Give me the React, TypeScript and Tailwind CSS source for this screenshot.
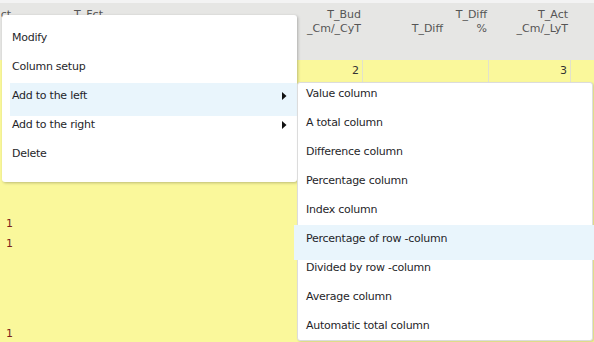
import React from 'react';
import clsx from 'clsx';

const mainItems = [
    { label: 'Modify' },
    { label: 'Column setup' },
    { label: 'Add to the left', sub: true, active: true },
    { label: 'Add to the right', sub: true },
    { label: 'Delete' },
];

const subItems = [
    'Value column',
    'A total column',
    'Difference column',
    'Percentage column',
    'Index column',
    'Percentage of row -column',
    'Divided by row -column',
    'Average column',
    'Automatic total column',
];

const Arrow = () => (
    <svg width="5" height="8" viewBox="0 0 5 8" className="mr-[10px]">
        <path d="M0 0 L4.5 4 L0 8 Z" fill="#111" />
    </svg>
);

const MenuItem = ({ label, active, sub }: { label: string; active?: boolean; sub?: boolean }) => (
    <div
        className={clsx(
            'h-[29px] pt-[4px] flex items-start justify-between',
            active && 'bg-[#e9f5fc] shadow-[0_0_0_2px_#e9f5fc]'
        )}
    >
        <span className="leading-[14px]">{label}</span>
        {sub && <div className="h-[14px] flex items-center"><Arrow /></div>}
    </div>
);

export default function App() {
    return (
        <div
            className="relative w-[594px] h-[342px] overflow-hidden bg-[#faf89b] text-[11px]"
            style={{ fontFamily: '"DejaVu Sans", Verdana, sans-serif' }}
        >
            {/* Header */}
            <div className="h-[3px] bg-[#f3f3f3]" />
            <div className="h-[57px] bg-[#e6e6e4] flex text-[#555] leading-[14px] pt-[5px]">
                <div className="w-[13px] text-right pr-[2px] overflow-hidden">ct</div>
                <div className="w-[92px] text-right pr-[2px]">T_Fct</div>
                <div className="w-[176px]" />
                <div className="w-[82px] text-right pr-[2px]">
                    <div>T_Bud</div>
                    <div>_Cm/_CyT</div>
                </div>
                <div className="w-[82px] text-right pr-[2px] pt-[14px]">T_Diff</div>
                <div className="w-[44px] text-right pr-[2px]">
                    <div>T_Diff</div>
                    <div>%</div>
                </div>
                <div className="w-[82px] text-right pr-[3px]">
                    <div>T_Act</div>
                    <div>_Cm/_LyT</div>
                </div>
                <div className="flex-1" />
            </div>

            {/* Body */}
            <div className="flex h-[22px] text-[#333] leading-[22px]">
                <div className="w-[363px] text-right pr-[3px] border-r border-[#e2e2cc]">2</div>
                <div className="w-[126px] border-r border-[#e2e2cc]" />
                <div className="w-[82px] text-right pr-[3px] border-r border-[#e2e2cc]">3</div>
                <div className="flex-1" />
            </div>
            <div className="pl-[6px] text-[#7a1f1f] leading-[14px]">
                <div className="h-[135px]" />
                <div className="h-[20px]">1</div>
                <div className="h-[90px]">1</div>
                <div>1</div>
            </div>

            {/* Context menu */}
            <div className="absolute left-[2px] top-[15px] w-[295px] h-[167px] pt-[12px] bg-white rounded-[3px] overflow-hidden shadow-[1px_1px_3px_rgba(0,0,0,0.25)] text-[#1f1f2a] tracking-[-0.25px]">
                {mainItems.map((it) => (
                    <div key={it.label} className="pl-[10px]">
                        <MenuItem label={it.label} sub={it.sub} active={it.active} />
                    </div>
                ))}
            </div>

            {/* Submenu */}
            <div className="absolute left-[297px] top-[82px] w-[296px] h-[259px] bg-white rounded-[3px] border border-[#dcdcdc] shadow-[1px_1px_2px_rgba(0,0,0,0.15)] text-[#1f1f2a] tracking-[-0.25px]">
                {subItems.map((label) => (
                    <div key={label} className={clsx(label === 'Percentage of row -column' && 'bg-[#e9f5fc] shadow-[0_0_0_3px_#e9f5fc] -mx-[1px] px-[1px]')}>
                        <div className="pl-[8px] h-[29px] pt-[4px] leading-[14px]">{label}</div>
                    </div>
                ))}
            </div>
        </div>
    );
}
